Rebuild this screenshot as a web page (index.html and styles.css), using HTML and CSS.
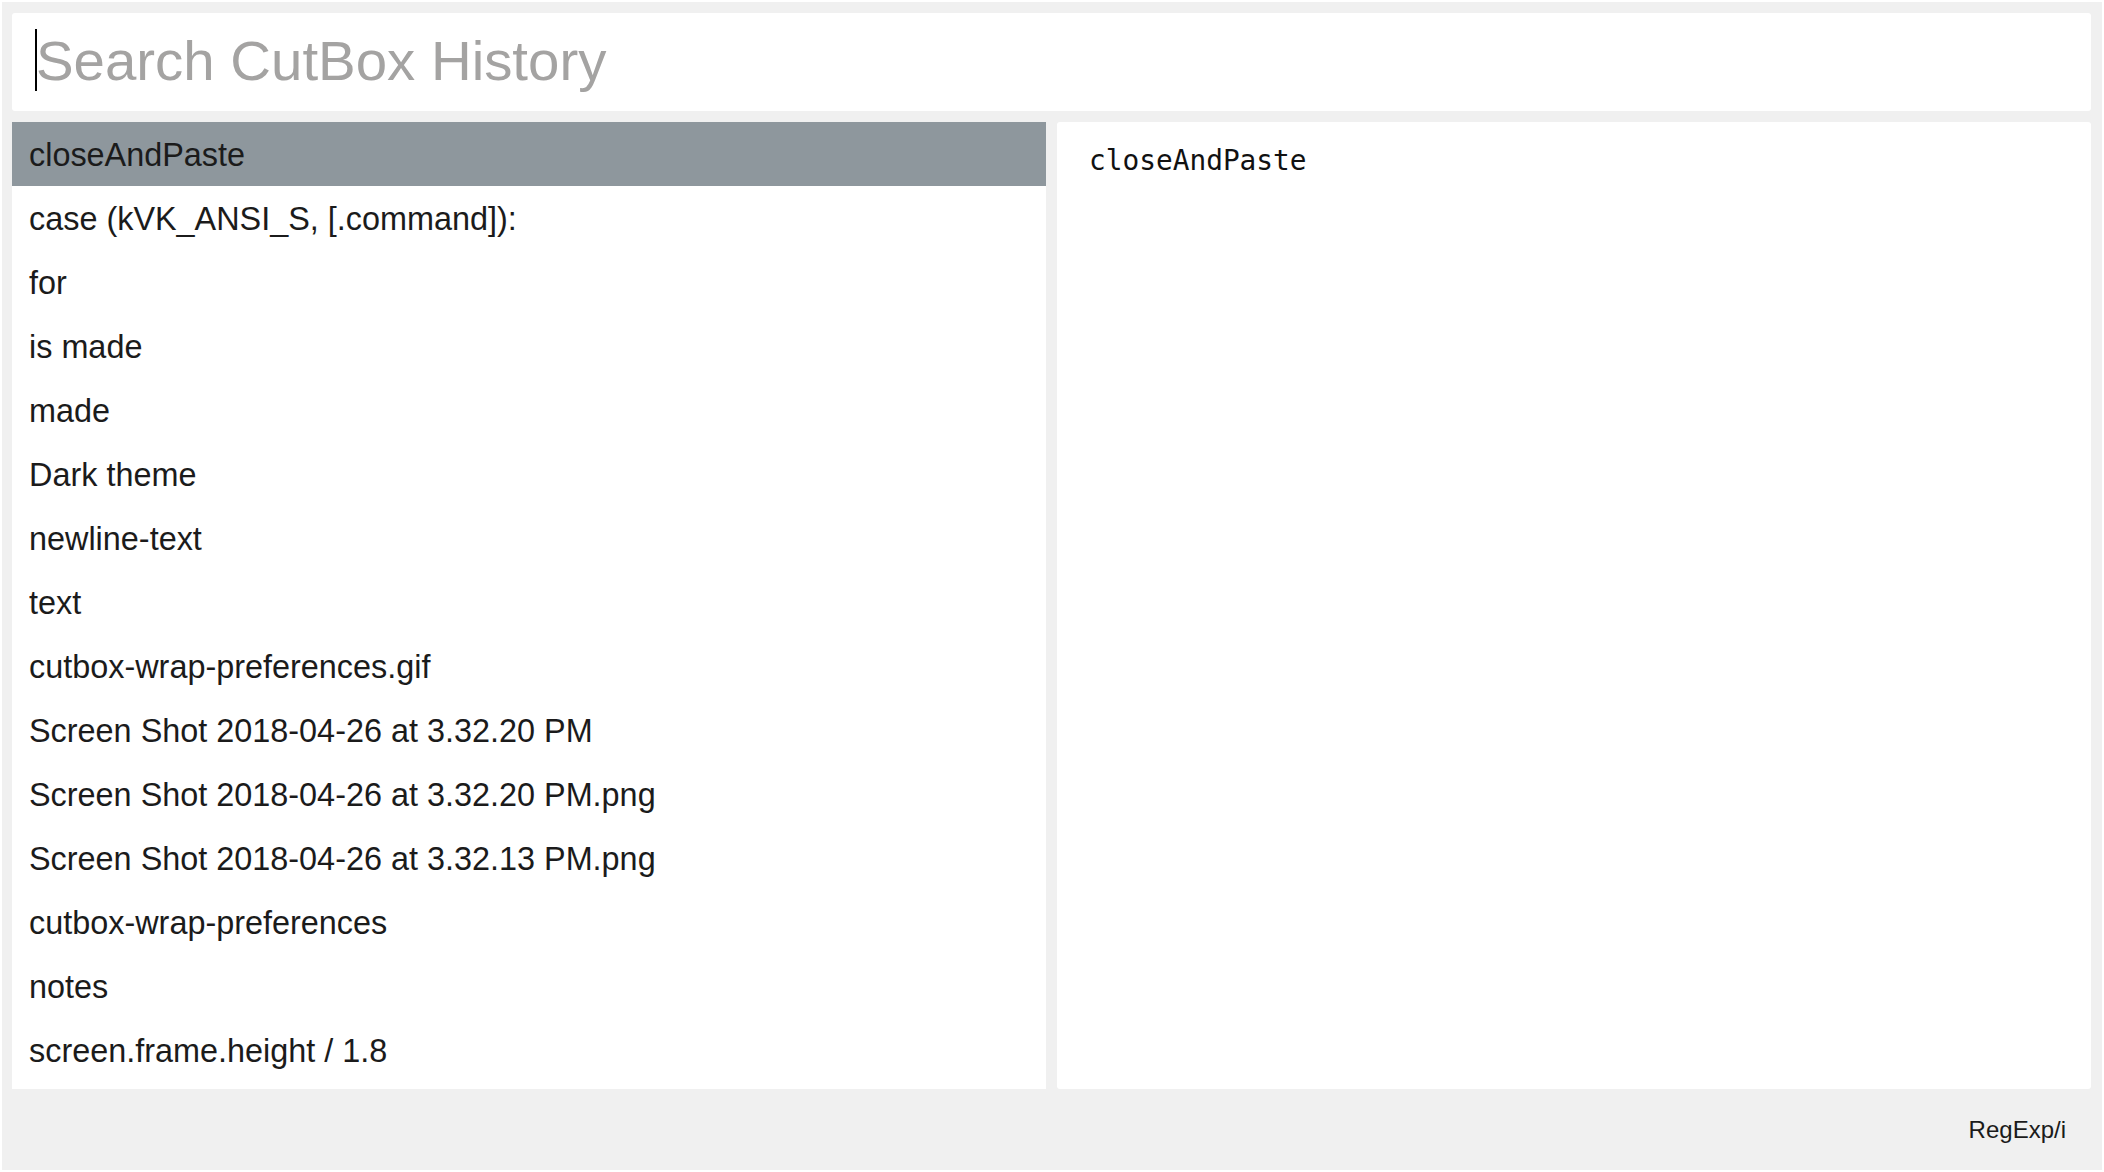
FILE: index.html
```html
<!DOCTYPE html>
<html>
<head>
<meta charset="utf-8">
<link rel="stylesheet" href="styles.css">
</head>
<body>
<div class="app">
  <div class="search">
    <span class="caret"></span>
    <span class="placeholder">Search CutBox History</span>
  </div>
  <div class="main">
    <ul class="list">
      <li class="row selected">closeAndPaste</li>
      <li class="row">case (kVK_ANSI_S, [.command]):</li>
      <li class="row">for</li>
      <li class="row">is made</li>
      <li class="row">made</li>
      <li class="row">Dark theme</li>
      <li class="row">newline-text</li>
      <li class="row">text</li>
      <li class="row">cutbox-wrap-preferences.gif</li>
      <li class="row">Screen Shot 2018-04-26 at 3.32.20 PM</li>
      <li class="row">Screen Shot 2018-04-26 at 3.32.20 PM.png</li>
      <li class="row">Screen Shot 2018-04-26 at 3.32.13 PM.png</li>
      <li class="row">cutbox-wrap-preferences</li>
      <li class="row">notes</li>
      <li class="row">screen.frame.height / 1.8</li>
    </ul>
    <div class="preview"><pre class="preview-text">closeAndPaste</pre></div>
  </div>
  <div class="footer"><span class="mode">RegExp/i</span></div>
</div>
</body>
</html>
```
FILE: styles.css
```css
html, body {
  margin: 0;
  padding: 0;
  background: #ffffff;
}
body {
  font-family: "Liberation Sans", Arial, sans-serif;
}
.app {
  margin: 2px;
  height: 1168px;
  box-sizing: border-box;
  background: #f0f0f0;
  padding: 11px 11px 0 10px;
  display: flex;
  flex-direction: column;
}
.search {
  height: 98px;
  flex: none;
  background: #ffffff;
  border-radius: 3px;
  display: flex;
  align-items: center;
  padding-left: 23px;
}
.caret {
  width: 2px;
  height: 62px;
  background: #000000;
  margin-top: -4px;
  flex: none;
}
.placeholder {
  font-size: 56.4px;
  color: #a4a3a2;
  margin-left: -1px;
  margin-top: -4px;
  white-space: nowrap;
}
.main {
  margin-top: 11px;
  height: 967px;
  flex: none;
  display: grid;
  grid-template-columns: minmax(0, 1fr) minmax(0, 1fr);
  column-gap: 11px;
}
.list {
  margin: 0;
  padding: 0;
  list-style: none;
  background: #ffffff;
  overflow: hidden;
}
.row {
  height: 64px;
  line-height: 66px;
  padding-left: 17px;
  font-size: 32.4px;
  color: #1b1b1b;
  white-space: nowrap;
}
.row.selected {
  background: #8e979d;
}
.preview {
  background: #ffffff;
  border-radius: 3px;
  padding: 22px 32px;
}
.preview-text {
  margin: 0;
  font-family: "DejaVu Sans Mono", "Liberation Mono", monospace;
  font-size: 27.8px;
  color: #111111;
}
.footer {
  flex: 1;
  display: flex;
  justify-content: flex-end;
  align-items: flex-start;
  padding-top: 27px;
  padding-right: 25px;
}
.mode {
  font-size: 24px;
  color: #1b1b1b;
}
```
